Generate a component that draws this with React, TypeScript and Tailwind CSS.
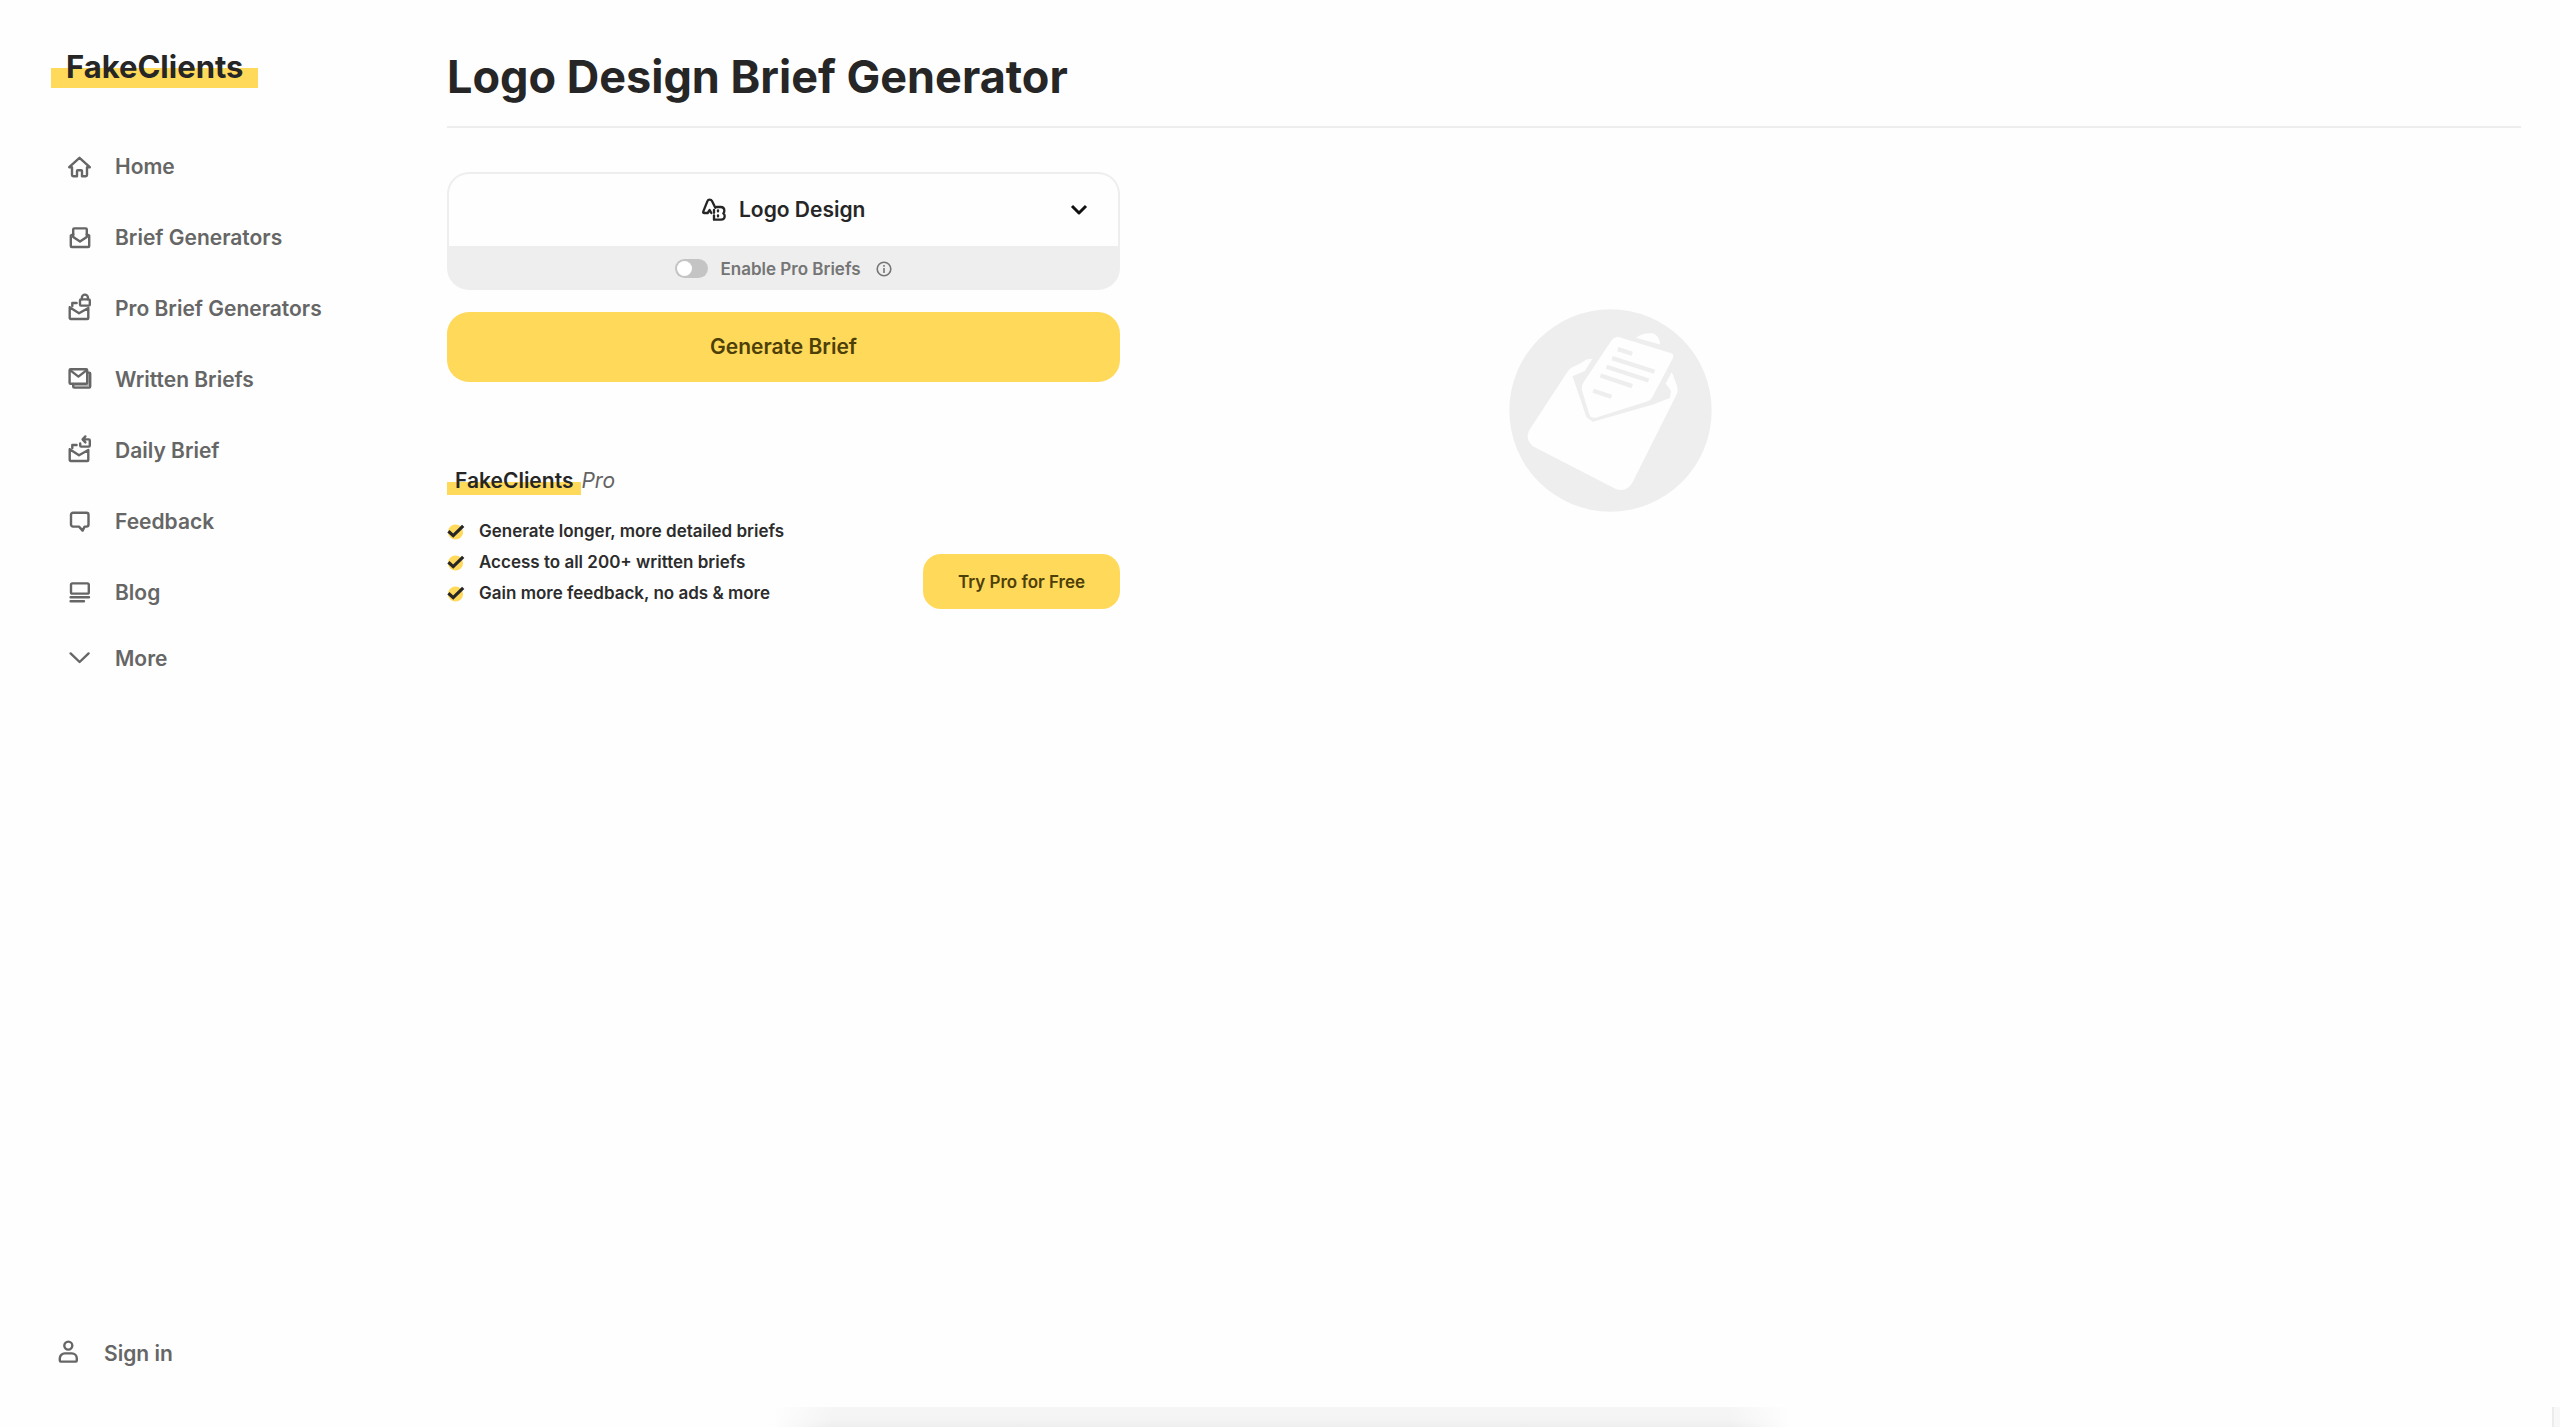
import React from "react";

type IconProps = { children: React.ReactNode };

function Icon({ children }: IconProps) {
  return (
    <svg
      viewBox="0 0 28 28"
      aria-hidden="true"
      className="h-7 w-7 shrink-0 overflow-visible"
      fill="none"
      stroke="currentColor"
      strokeWidth="2.4"
      strokeLinecap="round"
      strokeLinejoin="round"
    >
      {children}
    </svg>
  );
}

const openEnvelope = (
  <>
    <path d="M6.3 11V8H10.6" />
    <path d="M3.7 12.2V23a1 1 0 0 0 1 1H21.3a1 1 0 0 0 1-1V13L13 18.2 3.7 12.2" />
  </>
);

const links = [
  {
    label: "Home",
    icon: <path d="M13.5 4.8 3.2 14.2H6V22a1.2 1.2 0 0 0 1.2 1.2H11V18a.8.8 0 0 1 .8-.8h3.4a.8.8 0 0 1 .8.8v5.2h3.8A1.2 1.2 0 0 0 21 22V14.2h2.8Z" />,
  },
  {
    label: "Brief Generators",
    icon: (
      <>
        <path d="M7.2 13V5.4a1 1 0 0 1 1-1H19.8a1 1 0 0 1 1 1V13L14 17.6Z" />
        <path d="M7.2 10.2 4.8 11.6V22a1 1 0 0 0 1 1H22.2a1 1 0 0 0 1-1V11.6L20.8 10.2" />
      </>
    ),
  },
  {
    label: "Pro Brief Generators",
    icon: (
      <>
        {openEnvelope}
        <rect x="14" y="4.4" width="9.8" height="6.2" rx="1" />
        <path d="M15.9 4.2V2.6a3 3 0 0 1 6 0V4.2" />
      </>
    ),
  },
  {
    label: "Written Briefs",
    icon: (
      <>
        <path d="M21.4 6.6h1.8a1 1 0 0 1 1 1V20.6a1 1 0 0 1-1 1H8.2a1 1 0 0 1-1-1V18" />
        <path d="M22.6 8V19.6H8.4" strokeWidth="2" opacity=".5" />
        <rect x="3.6" y="3.2" width="17.6" height="14.6" rx="1" />
        <path d="M4.4 4.4 12.4 10.6 20.4 4.4" />
      </>
    ),
  },
  {
    label: "Daily Brief",
    icon: (
      <>
        {openEnvelope}
        <path d="M19.4-.6 16.6 2.4 19.4 5.4M16.8 2.4H22.8a1 1 0 0 1 1 1V8.6a1 1 0 0 1-1 1H15.2a1 1 0 0 1-1-1V6.4" />
      </>
    ),
  },
  {
    label: "Feedback",
    icon: <path d="M7 4.8H20.5a2 2 0 0 1 2 2V16.6a2 2 0 0 1-2 2H18.6L16.6 22.6 13 18.6H7a2 2 0 0 1-2-2V6.8a2 2 0 0 1 2-2Z" />,
  },
  {
    label: "Blog",
    icon: (
      <>
        <rect x="5" y="4.4" width="17.8" height="10.2" rx="1.4" />
        <path d="M4.6 18.2H23M4.6 22.2H18" />
      </>
    ),
  },
];

function Sidebar() {
  return (
    <aside className="flex w-[447px] shrink-0 flex-col text-[21px] leading-7 font-semibold text-[#666666]">
      <a href="#home" className="mt-12 ml-[51px] flex w-fit bg-linear-to-b from-transparent from-50% to-[#ffd95a] to-50% px-[15px] pb-[2px] text-[31px] leading-[38px] font-bold text-[#262626]">
        FakeClients
      </a>
      <nav className="mt-[51px] ml-[66px] flex flex-col">
        {links.map((link) => (
          <a key={link.label} href="#" className="mb-[15px] flex h-14 items-center gap-[21px]">
            <Icon>{link.icon}</Icon>
            {link.label}
          </a>
        ))}
        <button type="button" className="-mt-[5px] flex h-14 items-center gap-[21px]">
          <Icon>
            <path d="M4.6 8.4 13.6 17 22.6 8.4" />
          </Icon>
          More
        </button>
      </nav>
      <a href="#sign-in" className="mt-auto mb-[39px] ml-[54px] flex h-7 items-center gap-[22px]">
        <Icon>
          <circle cx="14.3" cy="5.6" r="4" />
          <path d="M5.8 20.6V18.4a5 5 0 0 1 5-5H17.8a5 5 0 0 1 5 5V20.6a1 1 0 0 1-1 1H6.8a1 1 0 0 1-1-1Z" />
        </Icon>
        Sign in
      </a>
    </aside>
  );
}

function GeneratorForm() {
  return (
    <form className="flex flex-col" onSubmit={(event) => event.preventDefault()}>
      <div className="rounded-[22px] bg-[#eeeeee] p-[2px]">
        <div className="relative flex h-[72px] items-center justify-center gap-3 rounded-t-[20px] bg-[#fefefe] text-[21px] leading-7 font-semibold text-[#262626]">
          <svg viewBox="815 112 78 72" aria-hidden="true" className="h-6 w-[26px] shrink-0 overflow-visible" fill="none" stroke="currentColor" strokeWidth="7" strokeLinejoin="round" strokeLinecap="round">
            <path d="M846 157l-5-9-6 9h-10q-5 0-3-5l12-30q2-5 7-5 5 0 7 4l10 20" />
            <path d="M854 156v-8M854 164v13h21q11 0 11-11 0-5-4-8 3-3 3-8 0-11-11-11h-12" />
            <path d="M866 149v3M866 164v3" />
          </svg>
          <select aria-label="Brief type" className="appearance-none bg-transparent">
            <option>Logo Design</option>
          </select>
          <svg viewBox="0 0 18 12" aria-hidden="true" className="pointer-events-none absolute right-[30px] h-3 w-[18px]" fill="none" stroke="#111" strokeWidth="3" strokeLinejoin="round">
            <path d="M2 2 9 9 16 2" />
          </svg>
        </div>
        <div className="flex h-[42px] items-center justify-center pt-[3px] text-[17px] leading-6 font-semibold text-[#757575]">
          <label className="flex items-center gap-3">
            <input
              type="checkbox"
              role="switch"
              className="h-[19px] w-[33px] appearance-none rounded-full bg-[#c4c4c4] p-[2px] before:block before:h-[15px] before:w-[15px] before:rounded-full before:bg-white checked:bg-[#ffd95a] checked:before:ml-auto"
            />
            Enable Pro Briefs
          </label>
          <button type="button" aria-label="About pro briefs" className="ml-[15px]">
            <svg viewBox="0 0 16 16" className="h-4 w-4" fill="none" stroke="currentColor" strokeWidth="1.6">
              <circle cx="8" cy="8" r="6.8" />
              <path d="M8 7V12M8 4V5.8" />
            </svg>
          </button>
        </div>
      </div>
      <button type="submit" className="mt-[22px] h-[70px] rounded-[22px] bg-[#ffd95a] text-[21px] leading-7 font-semibold text-[#4d3f08]">
        Generate Brief
      </button>
    </form>
  );
}

const benefits = ["Generate longer, more detailed briefs", "Access to all 200+ written briefs", "Gain more feedback, no ads & more"];

function ProPromo() {
  return (
    <section className="mt-[85px] flex items-end justify-between">
      <div>
        <h2 className="flex text-[21px] leading-7 font-semibold text-[#262626]">
          <span className="bg-linear-to-b from-transparent from-52% to-[#ffd95a] to-52% px-2">FakeClients</span>
          <em className="font-normal text-[#636363]">Pro</em>
        </h2>
        <ul className="mt-[21px] flex flex-col text-[17px] leading-[31px] font-semibold text-[#2c2c2c]">
          {benefits.map((benefit) => (
            <li key={benefit} className="flex items-center gap-[14px]">
              <svg viewBox="0 0 18 18" aria-hidden="true" className="h-[18px] w-[18px]" fill="none">
                <circle cx="8.5" cy="9" r="7.6" fill="#ffd95a" />
                <path d="M1.4 8.2 6.2 12.6 16.2 2.8" stroke="#262626" strokeWidth="3.2" />
              </svg>
              {benefit}
            </li>
          ))}
        </ul>
      </div>
      <button type="button" className="h-[55px] w-[197px] rounded-[18px] bg-[#ffd95a] text-[17px] leading-6 font-semibold text-[#4d3f08]">
        Try Pro for Free
      </button>
    </section>
  );
}

function EmptyBrief() {
  return (
    <svg viewBox="58 56 608 608" role="img" aria-label="No brief yet" className="mt-[137px] h-[203px] w-[203px]">
      <circle cx="362" cy="360" r="303" fill="#eeeeee" />
      <g fill="#fefefe">
        <path d="M303 205 246 231Q238 236 233 244L118 420Q106 446 128 466L378 595Q409 606 427 577L560 312Q566 297 560 284L548 250Z" />
        <path d="M438 142Q462 126 488 129 508 135 511 162Z" />
      </g>
      <path d="M249 258 315 205 548 250 530 276 545 300 541 322 490 342 309 394 290 380Z" fill="#eeeeee" />
      <path d="M318 203 303 205 249 258 290 375 309 394Z" fill="#eeeeee" />
      <path d="M249 257 285 242 308 205 290 207 250 234Z" fill="#fefefe" />
      <path d="M545 246 527 279 543 301 540 324 562 306 560 284Z" fill="#fefefe" />
      <path d="M385 138 Q371 138 363 150L283 270Q272 284 275 300L297 372Q302 386 318 383L474 334Q483 331 488 322L550 204Q556 189 542 186Z" fill="#fefefe" stroke="#eeeeee" strokeWidth="3" />
      <path d="M384 176 427 190M367 203 494 244M350 229 476 270M332 255 427 287M310 301 365 319" stroke="#eeeeee" strokeWidth="13" />
    </svg>
  );
}

export default function App() {
  return (
    <div className="flex min-h-screen flex-col bg-[#fefefe] font-['Inter',sans-serif]">
      <div className="flex grow">
        <Sidebar />
        <main className="grow pr-[39px]">
          <h1 className="border-b-2 border-[#eeeeee] pt-[47px] pb-[19px] text-[45px] leading-[60px] font-bold text-[#262626]">
            Logo Design Brief Generator
          </h1>
          <div className="grid grid-cols-[673fr_981fr_420fr] pt-11">
            <div>
              <GeneratorForm />
              <ProPromo />
            </div>
            <div className="flex justify-center">
              <EmptyBrief />
            </div>
          </div>
        </main>
      </div>
      <footer aria-hidden="true" className="flex h-5 justify-end">
        <div className="mr-[762px] w-[1018px] bg-[linear-gradient(to_right,#fefefe,transparent_6%,transparent_94%,#fefefe),linear-gradient(#f6f6f6,#f4f4f4_60%,#eeeeee)]" />
        <div className="w-2 border-l-2 border-[#ececec] bg-[#f8f8f8]" />
      </footer>
    </div>
  );
}
